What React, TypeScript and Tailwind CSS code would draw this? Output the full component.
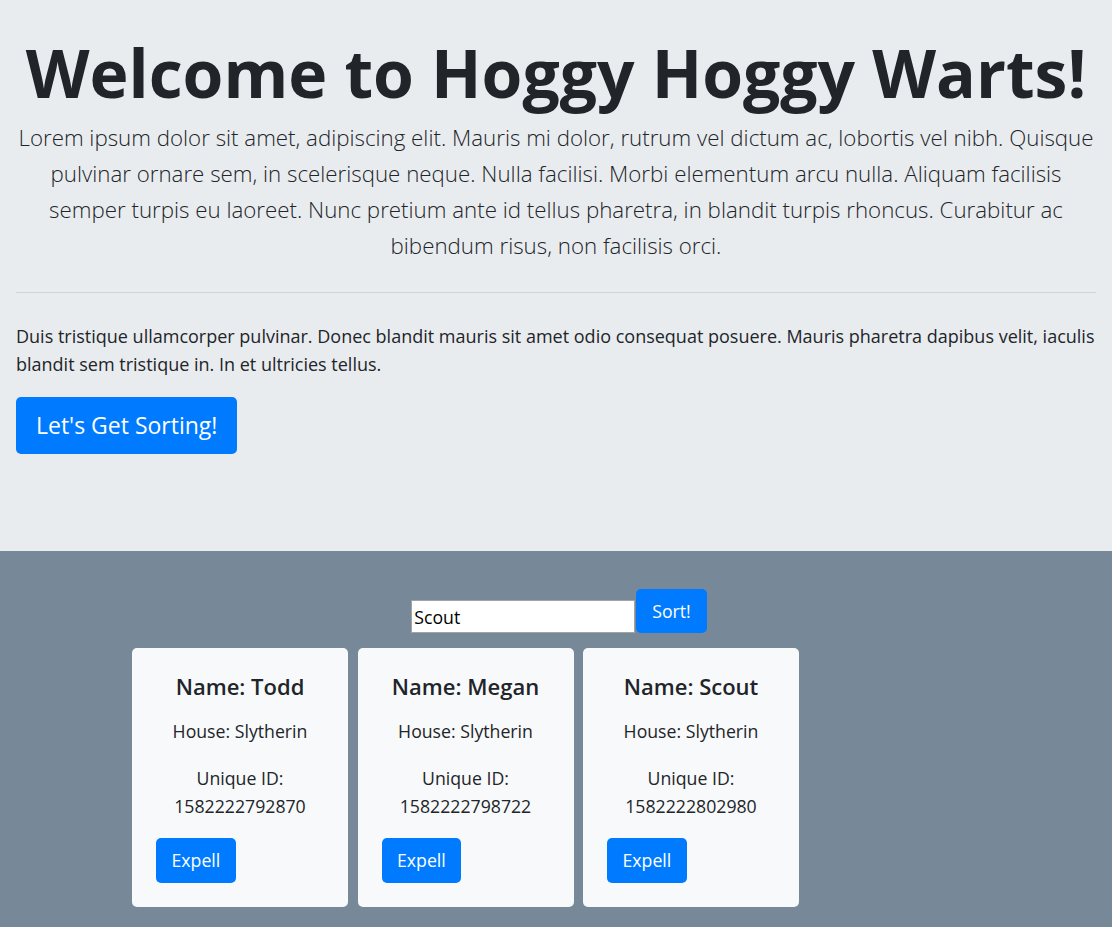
const students = [
  { name: "Todd", house: "Slytherin", id: "1582222792870" },
  { name: "Megan", house: "Slytherin", id: "1582222798722" },
  { name: "Scout", house: "Slytherin", id: "1582222802980" },
];

const StudentCard = ({ name, house, id }: { name: string; house: string; id: string }) => {
  return (
    <div className="w-[216px] bg-[#f8f9fa] rounded-[5px] px-6 pt-[25px] pb-6">
      <h5 className="text-center text-[22px] font-semibold leading-[1.2] mb-[17px]">Name: {name}</h5>
      <p className="text-center mb-[19px]">House: {house}</p>
      <p className="text-center mb-[18px]">
        Unique ID:
        <br />
        {id}
      </p>
      <button className="bg-[#007bff] text-white rounded-[5px] px-[15.5px] py-[8.5px] leading-[28px]">Expell</button>
    </div>
  );
};

export default function App() {
  return (
    <div className="min-h-[927px] flex flex-col font-['Open_Sans',sans-serif] text-[17.7px] leading-[28px] text-[#212529]">
      <div className="bg-[#e9ecef] px-4 pt-[33px] pb-[97px]">
        <h1 className="text-center text-[66px] font-bold leading-[1.2]">Welcome to Hoggy Hoggy Warts!</h1>
        <p className="mt-[8px] text-center text-[22.3px] leading-[36px] font-light">
          Lorem ipsum dolor sit amet, adipiscing elit. Mauris mi dolor, rutrum vel dictum ac, lobortis vel nibh. Quisque
          pulvinar ornare sem, in scelerisque neque. Nulla facilisi. Morbi elementum arcu nulla. Aliquam facilisis semper
          turpis eu laoreet. Nunc pretium ante id tellus pharetra, in blandit turpis rhoncus. Curabitur ac bibendum risus,
          non facilisis orci.
        </p>
        <hr className="mt-[28px] border-t border-[#d2d5d8]" />
        <p className="mt-[29px] text-[18px]">
          Duis tristique ullamcorper pulvinar. Donec blandit mauris sit amet odio consequat posuere. Mauris pharetra
          dapibus velit, iaculis blandit sem tristique in. In et ultricies tellus.
        </p>
        <button className="mt-[19px] bg-[#007bff] text-white rounded-[5px] px-[20px] py-[11px] text-[23px] leading-[35px]">
          Let's Get Sorting!
        </button>
      </div>
      <div className="flex-1 bg-[#778899] pt-[38px] pb-[21px]">
        <div className="flex justify-center items-end pl-[6px]">
          <input
            type="text"
            defaultValue="Scout"
            className="w-[224px] h-[33px] bg-white border border-[#a3a3a3] px-[2px] text-black outline-none"
          />
          <button className="ml-px bg-[#007bff] text-white rounded-[5px] px-[16px] py-[8px] leading-[28px]">Sort!</button>
        </div>
        <div className="w-[846px] mx-auto mt-[15px] flex gap-[9.5px] -translate-x-px">
          {students.map((s) => (
            <StudentCard key={s.id} {...s} />
          ))}
        </div>
      </div>
    </div>
  );
}
